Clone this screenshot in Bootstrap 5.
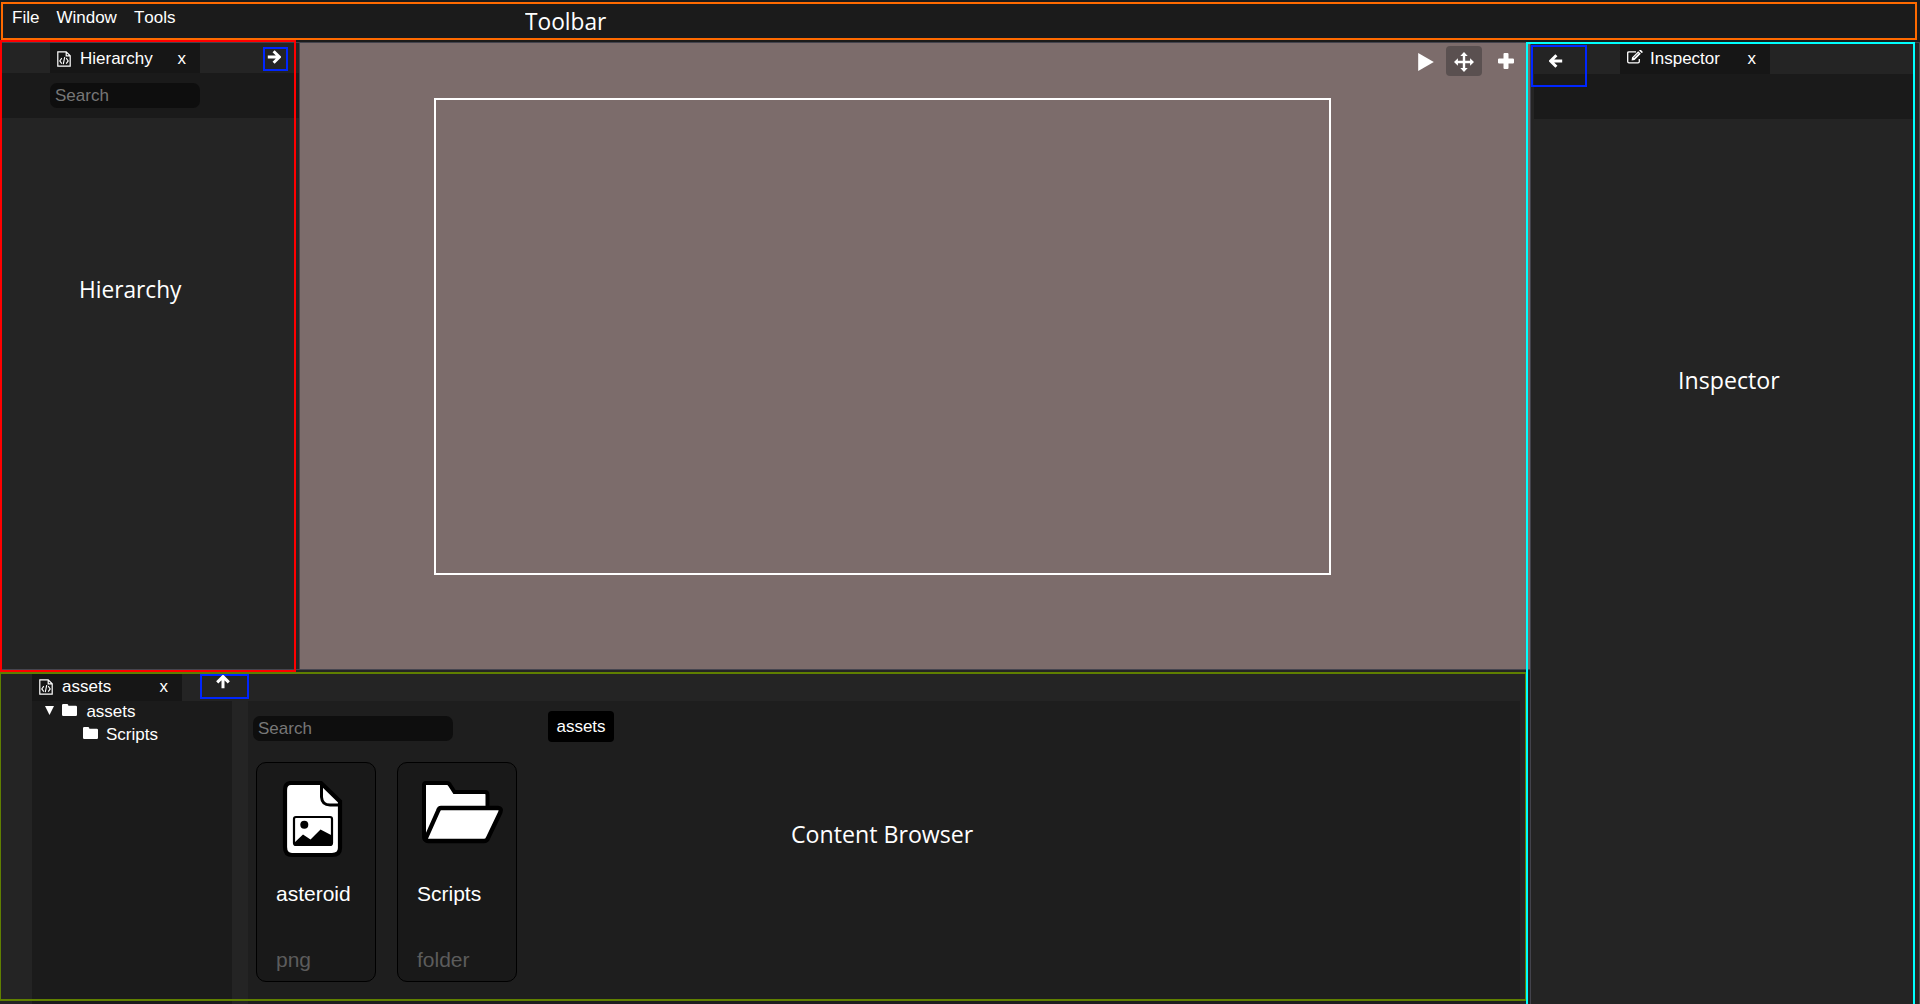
<!DOCTYPE html>
<html lang="en">
<head>
<meta charset="utf-8">
<title>Editor layout</title>
<link href="https://cdn.jsdelivr.net/npm/bootstrap@5.3.0/dist/css/bootstrap.min.css" rel="stylesheet">
<style>
body{width:1920px;height:1004px;overflow:hidden;background:#1b1b1b;color:#fff;font:17px/24px "Liberation Sans",Arial,sans-serif;font-kerning:none}
svg{display:block;flex:none;fill:currentColor}
.topbar{height:42px;padding:0 0 0 1px}
.topmenu{height:36px;padding-left:11px;gap:17px}
.topmenu .menu-item{padding:0;line-height:24px;color:#fff}
.workspace{height:962px;border-top:1px solid #43434c}
.leftside{width:1530px}
.upper{height:627px;border-bottom:1px solid #45454f}
.hier{width:300px;background:#242424;border-right:1px solid #43434c}
.tabstrip{height:30px;background:#242424}
.hier .tabstrip,.hier .band{padding-left:50px}
.tabitem{width:150px;height:30px;background:#161616;padding:1px 14px 0 7px}
.tabitem svg{margin-right:9px}
.band{height:45px;background:#1a1a1a}
.searchbox{width:150px;height:25px;border:0;border-radius:7px;background:#0e0e0e;color:#fff;font-size:17px;line-height:24px;padding:1px 5px 0}
.searchbox::placeholder{color:#777;opacity:1}
.view{background:#7c6c6b;padding:55px 0 0 134px}
.camera{width:897px;height:477px;border:2px solid #fff}
.viewtools{position:absolute;right:16px;top:3px;height:30px}
.playicon{margin-top:2px}
.movebtn{width:36px;height:30px;background:#5a5050;border-radius:4px;margin:0 16px 0 12px;padding-top:1px}
.lower{height:334px;background:#242424;padding-left:32px}
.lower .tabstrip{height:31px}
.lower .tabitem{height:31px;padding-top:2px}
.tree{width:200px;background:#1b1b1b}
.treerow{height:23px}
.treerow span{position:relative;top:-1px}
.treerow svg{margin-bottom:6px}
.treerow .caret{margin-bottom:4px}
.level1{padding-left:13px}
.level2{padding-left:51px}
.browser{width:1272px;margin-left:16px;background:#1e1e1e;padding:10px 0 0 5px}
.browser .searchbox{width:200px;margin-top:3px;padding-top:2px}
.crumb{width:66px;height:31px;margin-left:95px;border-radius:4px;background:#000;color:#fff;font-size:17px;line-height:32px;padding:0;border:0}
.tiles{margin:20px 0 0 3px;gap:21px}
.tile{width:120px;height:220px;border:1px solid #000;border-radius:10px;background:#191919;color:#fff;font-size:21px;line-height:26px;padding:18px 0 0 19px}
.tile .pic{height:100px}
.tile .kind{color:#5c5c5c;margin-top:40px}
.insp{width:390px;background:#242424;border-left:1px solid #43434c;border-right:1px solid #4a4a4a}
.insp .tabstrip{height:31px;padding:1px 0 0 89px}
.insp .tabitem{padding-top:0}
.insp .tabitem svg{margin:0 7px 4px 0}
.insp .band{margin:0 5px 0 3px}
.frame{position:absolute;pointer-events:none;border:2px solid}
.f-tool{left:1px;top:2px;width:1916px;height:38px;color:#ff6a00}
.f-hier{left:0;top:40px;width:296px;height:632px;color:#f00}
.f-cont{left:0;top:672px;width:1526px;height:329px;color:#5f7f00;border-left-width:1px;border-right-width:1px}
.f-insp{left:1526px;top:42px;width:389px;height:980px;color:#0ff}
.f-a{left:263px;top:47px;width:25px;height:24px;color:#0026ff}
.f-b{left:200px;top:674px;width:49px;height:25px;color:#0026ff}
.f-c{left:1531px;top:45px;width:56px;height:42px;color:#0026ff}
.arr{position:absolute;color:#fff}
.arr-a{left:267px;top:50px}
.arr-b{left:216px;top:675px;transform:rotate(-90deg)}
.arr-c{left:1549px;top:54px;transform:scaleX(-1)}
.cap{position:absolute;font:24px/32px "Open Sans","Noto Sans",sans-serif;white-space:nowrap;transform-origin:0 50%;transform:scaleX(.945)}
.cap-tool{left:525px;top:5px;font-kerning:normal}
.cap-hier{left:79px;top:273px}
.cap-insp{left:1678px;top:364px;transform:scaleX(.965)}
.cap-cont{left:791px;top:818px;transform:scaleX(.965)}
</style>
<script src="https://cdn.jsdelivr.net/npm/bootstrap@5.3.0/dist/js/bootstrap.bundle.min.js"></script>
</head>
<body class="position-relative">
<svg width="0" height="0" class="position-absolute">
<symbol id="code" viewBox="0 0 14 16"><path d="M.8.8H9.200L13.200 4.800V15.200H.8ZM9.200.8V4.800H13.200" fill="none" stroke="currentColor" stroke-width="1.200"/><path d="M4.800 7.200 2.800 9.900 4.800 12.600M9.200 7.200 11.200 9.900 9.200 12.600M7.700 6.200 6.300 13.200" fill="none" stroke="currentColor" stroke-width="1.100"/></symbol>
<symbol id="arrow" viewBox="0 0 14 14"><path d="M.8 7H12M6.600 1.200 12.400 7 6.600 12.800" fill="none" stroke="currentColor" stroke-width="3"/></symbol>
<symbol id="dir" viewBox="0 0 15 12"><path d="M1.200 0H5.200Q6.300 0 6.400 1.700H13.800Q15 1.700 15 3V10.800Q15 12 13.800 12H1.200Q0 12 0 10.800V1.200Q0 0 1.200 0Z"/></symbol>
</svg>

<header class="topbar">
  <nav class="topmenu nav d-flex align-items-center">
    <a class="menu-item nav-link" href="#">File</a><a class="menu-item nav-link" href="#">Window</a><a class="menu-item nav-link" href="#">Tools</a>
  </nav>
</header>

<main class="workspace d-flex">
  <div class="leftside d-flex flex-column">
    <div class="upper d-flex">
      <section class="hier">
        <div class="tabstrip d-flex"><div class="tabitem d-flex align-items-center"><svg width="14" height="16"><use href="#code"/></svg><span>Hierarchy</span><span class="ms-auto">x</span></div></div>
        <div class="band d-flex align-items-center"><input class="searchbox" placeholder="Search"></div>
      </section>
      <section class="view flex-grow-1 position-relative">
        <div class="camera"></div>
        <div class="viewtools d-flex align-items-center">
          <svg class="playicon" width="16" height="18" viewBox="0 0 16 18"><path d="M.2 0 15.800 9 .2 18Z"/></svg>
          <div class="movebtn d-flex align-items-center justify-content-center"><svg width="20" height="20" viewBox="0 0 20 20"><path d="M10 0 13.700 3.900H11.200V8.800H16.100V6.300L20 10 16.100 13.700V11.200H11.200V16.100H13.700L10 20 6.300 16.100H8.800V11.200H3.900V13.700L0 10 3.900 6.300V8.800H8.800V3.900H6.300Z"/></svg></div>
          <svg width="16" height="16" viewBox="0 0 16 16"><path d="M6.600 0H9.400Q10.500 0 10.500 1.100V5.500H14.900Q16 5.500 16 6.600V9.400Q16 10.500 14.900 10.500H10.500V14.900Q10.500 16 9.400 16H6.600Q5.500 16 5.500 14.900V10.500H1.100Q0 10.500 0 9.400V6.600Q0 5.500 1.100 5.500H5.500V1.100Q5.500 0 6.600 0Z"/></svg>
        </div>
      </section>
    </div>
    <section class="lower d-flex flex-column">
      <div class="tabstrip"><div class="tabitem d-flex align-items-center"><svg width="14" height="16"><use href="#code"/></svg><span>assets</span><span class="ms-auto">x</span></div></div>
      <div class="d-flex flex-grow-1">
        <div class="tree">
          <div class="treerow level1 d-flex align-items-center"><svg width="9" height="9" viewBox="0 0 9 9" class="caret"><path d="M0 0H9L4.500 9Z"/></svg><svg width="15" height="12" class="ms-2 me-2"><use href="#dir"/></svg><span class="ps-0 ms-0">&#8202;assets</span></div>
          <div class="treerow level2 d-flex align-items-center"><svg width="15" height="12" class="me-2"><use href="#dir"/></svg><span>Scripts</span></div>
        </div>
        <div class="browser">
          <div class="d-flex align-items-center"><input class="searchbox" placeholder="Search"><button class="crumb btn">assets</button></div>
          <div class="tiles d-flex">
            <div class="tile">
              <div class="pic"><svg width="74" height="78" viewBox="276 781 74 78"><path d="M291 783H321L340 801.500V848Q340 855 332 855H292Q285 855 285 847V790Q285 783 291 783Z" fill="#fff" stroke="#000" stroke-width="4.200"/><path d="M321.500 783V797Q322 805 330 805H341" fill="none" stroke="#000" stroke-width="3"/><rect x="294" y="817" width="38" height="28" rx="2" fill="#fff" stroke="#000" stroke-width="2.200"/><circle cx="304.300" cy="824.700" r="4" fill="#000"/><path d="M294 843 303 834.500 310.500 839.500 320.500 829.500 332 835.500V845H294Z" fill="#000"/></svg></div>
              <div>asteroid</div><div class="kind">png</div>
            </div>
            <div class="tile">
              <div class="pic"><svg width="90" height="66" viewBox="417 781 90 66"><path d="M426 783H447Q449 783 450 785L454.500 792H485Q487.500 792 487.500 795V840H427Q424 840 424 837V785Q424 783 426 783Z" fill="#fff" stroke="#000" stroke-width="4"/><path d="M484 812 505 812V850H484Z" fill="#191919"/><path d="M441 808H498Q502 808.500 500.500 812L488 838Q487 841 484 841H428Q425 841 426 838L438 811Q439 808 441 808Z" fill="#fff" stroke="#000" stroke-width="4.300"/></svg></div>
              <div>Scripts</div><div class="kind">folder</div>
            </div>
          </div>
        </div>
      </div>
    </section>
  </div>
  <aside class="insp">
    <div class="tabstrip"><div class="tabitem d-flex align-items-center"><svg width="16" height="14" viewBox="0 0 16 14"><path d="M9 1.800H2Q.7 1.800 .7 3V11.500Q.7 12.800 2 12.800H11Q12.300 12.800 12.300 11.500V9" fill="none" stroke="currentColor" stroke-width="1.300"/><path d="M5 7.500 11.200 1.200 13.800 3.800 7.600 10.100 4.600 10.600ZM12 .6 12.800 0H14L15.700 1.700V2.500L14.600 3.100Z"/><path d="M6.700 8 11.300 3.300" stroke="#161616" stroke-width=".8"/></svg><span>Inspector</span><span class="ms-auto">x</span></div></div>
    <div class="band"></div>
  </aside>
</main>

<div class="frame f-tool"></div>
<div class="frame f-hier"></div>
<div class="frame f-cont"></div>
<div class="frame f-insp"></div>
<div class="frame f-a"></div><div class="frame f-b"></div><div class="frame f-c"></div>
<svg class="arr arr-a" width="14" height="14"><use href="#arrow"/></svg>
<svg class="arr arr-b" width="14" height="14"><use href="#arrow"/></svg>
<svg class="arr arr-c" width="14" height="14"><use href="#arrow"/></svg>
<div class="cap cap-tool">Toolbar</div>
<div class="cap cap-hier">Hierarchy</div>
<div class="cap cap-insp">Inspector</div>
<div class="cap cap-cont">Content Browser</div>
</body>
</html>
